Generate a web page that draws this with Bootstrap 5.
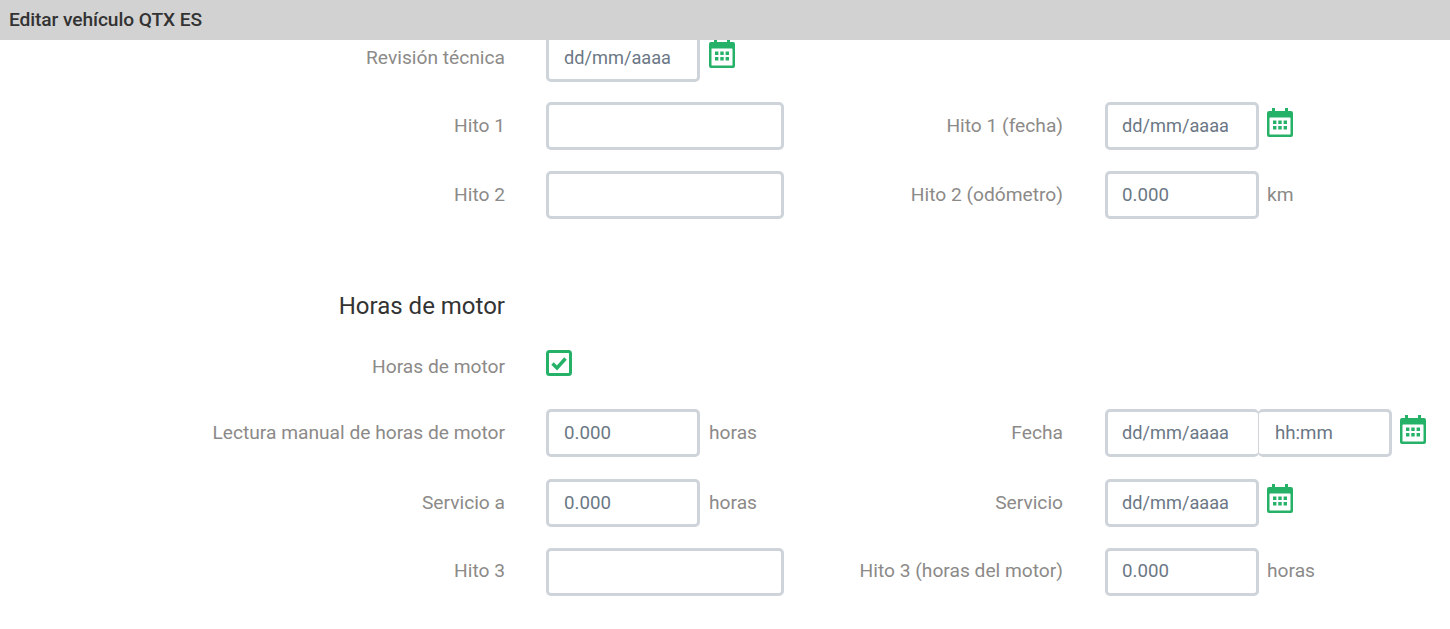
<!DOCTYPE html>
<html lang="es">
<head>
<meta charset="utf-8">
<title>Editar vehículo QTX ES</title>
<link href="https://cdn.jsdelivr.net/npm/bootstrap@5.3.0/dist/css/bootstrap.min.css" rel="stylesheet">
<style>
html,body{height:100%;overflow:hidden;background:#fff;font-family:Roboto,"Liberation Sans",sans-serif}
.top-strip{height:40px;background:#d2d2d2;color:#333;font-size:19.2px;font-weight:500;line-height:40px;padding-left:9px;position:relative;z-index:2;letter-spacing:-.1px}
.scroller{height:589px;overflow:hidden}
.inner{margin-top:-6.25px}
.frow{display:flex;height:48px;margin-bottom:20.5px}
.frow.low{margin-bottom:21.5px}
.frow.mid{margin-bottom:21px}
.frow.tickrow{margin-bottom:18.5px}
.fld{width:558px;display:flex;align-items:center;flex:none}
.lbl{width:505px;flex:none;text-align:right;color:#8c8a88;font-size:19.2px;margin:0;padding-top:1px}
.ctl{margin-left:41px;display:flex;align-items:center}
.fld+.fld .ctl{margin-left:42px}
.inp{height:48px;border:3px solid #ced4da;border-radius:5px;color:#6b7785;font-size:18.7px;padding:0 15px;background:#fff;box-shadow:none}
.inp::placeholder{color:#6b7785;opacity:1}
.inp.dt{font-size:18.2px;padding-bottom:1px}
.fld+.fld .inp{padding-left:14px}
.wide{width:238px}.nar{width:154px}
.fld+.fld .inp.tim{width:134px;margin-left:-1px;border-width:3px 3px 3px 1.5px;padding-left:16px}
.inp.joined{border-width:3px 1.5px 3px 3px}
.unit{color:#8c8a88;font-size:19.2px;margin-left:9px;padding-top:1px}
.fld+.fld .unit{margin-left:8px}
.cal{width:26px;height:30px;margin-left:9px;margin-top:-7px;flex:none;color:#25b268}
.fld+.fld .cal{margin-left:8px}
.sect{height:48px;display:flex;align-items:center;margin-top:64px;margin-bottom:12px}
.sect h2{width:505px;margin:0;text-align:right;font-size:24px;font-weight:400;color:#333}
.tick{width:26px;height:26px;margin-top:-8px;display:block;color:#25b268}
.frow:last-child .lbl{padding-top:0;padding-bottom:1px}
.frow:last-child .unit{padding-top:0;padding-bottom:1px}
.frow:last-child .inp{padding-bottom:2px}
</style>
</head>
<body>
<div class="top-strip">Editar vehículo QTX ES</div>
<div class="scroller"><div class="inner">
<svg width="0" height="0" class="d-block position-absolute"><defs>
<symbol id="calicon" viewBox="0 0 26 30">
<path fill="currentColor" d="M5 0h3v3h10V0h3v3h3a2 2 0 0 1 2 2v22a2 2 0 0 1-2 2H2a2 2 0 0 1-2-2V5a2 2 0 0 1 2-2h3z"/>
<rect x="2.5" y="9.5" width="21" height="17" rx=".5" fill="#fff"/>
<path fill="currentColor" d="M6 12.5h3.4v3.4H6zM11.3 12.5h3.4v3.4h-3.4zM16.6 12.5H20v3.4h-3.4zM6 18h3.4v3.4H6zM11.3 18h3.4v3.4h-3.4zM16.6 18H20v3.4h-3.4z"/>
</symbol></defs></svg>

<div class="frow">
  <div class="fld"><label class="lbl">Revisión técnica</label><div class="ctl"><input class="form-control inp nar dt" placeholder="dd/mm/aaaa"><svg class="cal"><use href="#calicon"/></svg></div></div>
</div>
<div class="frow">
  <div class="fld"><label class="lbl">Hito 1</label><div class="ctl"><input class="form-control inp wide"></div></div>
  <div class="fld"><label class="lbl">Hito 1 (fecha)</label><div class="ctl"><input class="form-control inp nar dt" placeholder="dd/mm/aaaa"><svg class="cal"><use href="#calicon"/></svg></div></div>
</div>
<div class="frow">
  <div class="fld"><label class="lbl">Hito 2</label><div class="ctl"><input class="form-control inp wide"></div></div>
  <div class="fld"><label class="lbl">Hito 2 (odómetro)</label><div class="ctl"><input class="form-control inp nar" placeholder="0.000"><span class="unit">km</span></div></div>
</div>
<div class="sect"><h2>Horas de motor</h2></div>
<div class="frow tickrow">
  <div class="fld"><label class="lbl">Horas de motor</label><div class="ctl"><svg class="tick" viewBox="0 0 26 26"><rect x="1.5" y="1.5" width="23" height="23" rx="2" fill="#fff" stroke="currentColor" stroke-width="3"/><path d="M6.5 13.5l4.5 4.5L19.5 8.5" fill="none" stroke="currentColor" stroke-width="3.4"/></svg></div></div>
</div>
<div class="frow low">
  <div class="fld"><label class="lbl">Lectura manual de horas de motor</label><div class="ctl"><input class="form-control inp nar" placeholder="0.000"><span class="unit">horas</span></div></div>
  <div class="fld"><label class="lbl">Fecha</label><div class="ctl"><input class="form-control inp nar joined dt" placeholder="dd/mm/aaaa"><input class="form-control inp tim" placeholder="hh:mm"><svg class="cal"><use href="#calicon"/></svg></div></div>
</div>
<div class="frow mid">
  <div class="fld"><label class="lbl">Servicio a</label><div class="ctl"><input class="form-control inp nar" placeholder="0.000"><span class="unit">horas</span></div></div>
  <div class="fld"><label class="lbl">Servicio</label><div class="ctl"><input class="form-control inp nar dt" placeholder="dd/mm/aaaa"><svg class="cal"><use href="#calicon"/></svg></div></div>
</div>
<div class="frow">
  <div class="fld"><label class="lbl">Hito 3</label><div class="ctl"><input class="form-control inp wide"></div></div>
  <div class="fld"><label class="lbl">Hito 3 (horas del motor)</label><div class="ctl"><input class="form-control inp nar" placeholder="0.000"><span class="unit">horas</span></div></div>
</div>
</div></div>
<script src="https://cdn.jsdelivr.net/npm/bootstrap@5.3.0/dist/js/bootstrap.bundle.min.js"></script>
</body>
</html>
